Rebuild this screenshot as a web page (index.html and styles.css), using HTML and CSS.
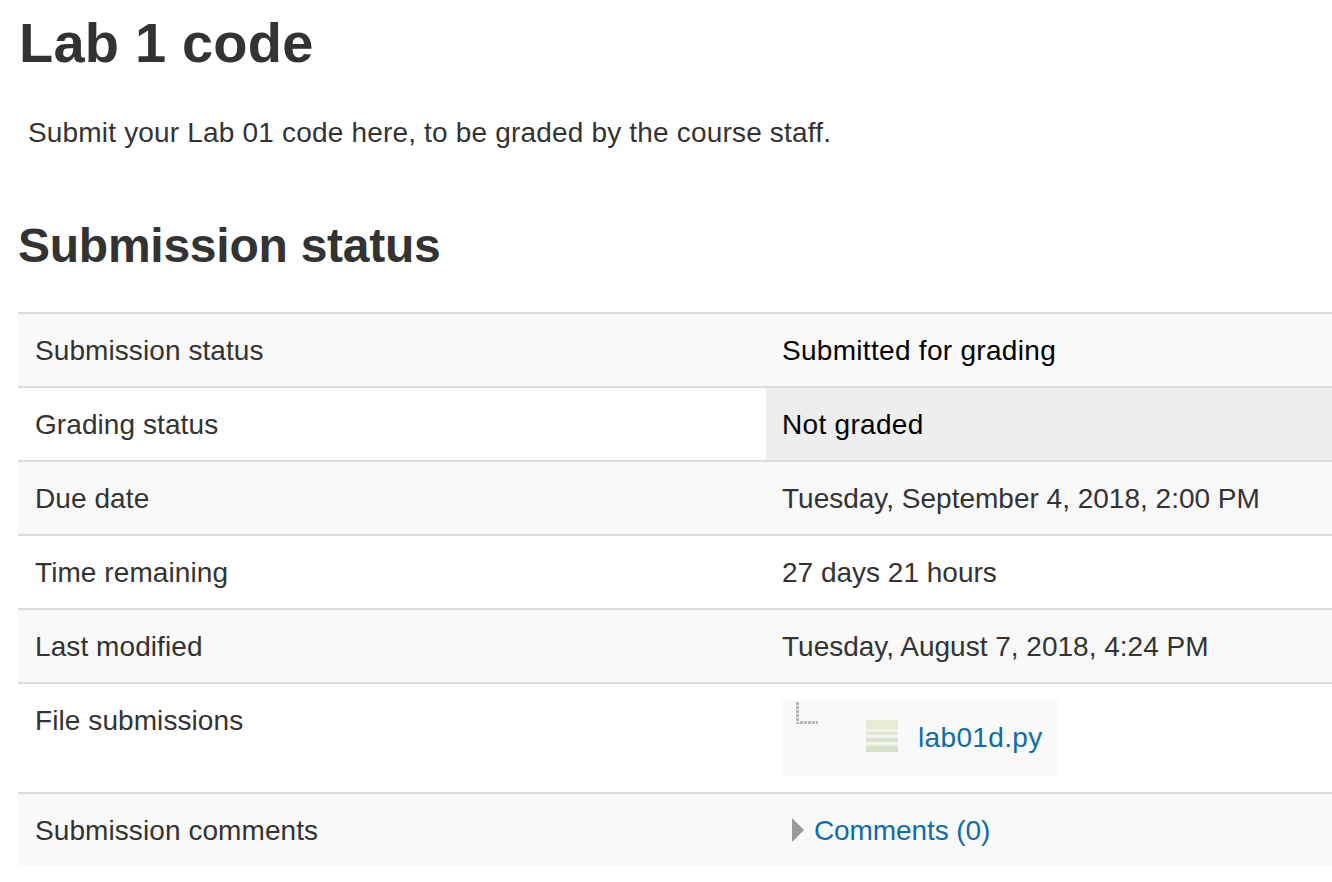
FILE: index.html
```html
<!DOCTYPE html>
<html lang="en">
<head>
    <meta charset="UTF-8">
    <title>Lab 1 code</title>
    <link rel="stylesheet" href="styles.css">
</head>
<body>
    <h2 class="page-title">Lab 1 code</h2>
    <p class="intro">Submit your Lab 01 code here, to be graded by the course staff.</p>
    <h3 class="section-title">Submission status</h3>
    <table class="status-table">
        <tr class="odd">
            <td class="label">Submission status</td>
            <td class="value dark">Submitted for grading</td>
        </tr>
        <tr>
            <td class="label">Grading status</td>
            <td class="value dark not-graded">Not graded</td>
        </tr>
        <tr class="odd">
            <td class="label">Due date</td>
            <td class="value">Tuesday, September 4, 2018, 2:00 PM</td>
        </tr>
        <tr>
            <td class="label">Time remaining</td>
            <td class="value">27 days 21 hours</td>
        </tr>
        <tr class="odd">
            <td class="label">Last modified</td>
            <td class="value">Tuesday, August 7, 2018, 4:24 PM</td>
        </tr>
        <tr class="files-row">
            <td class="label">File submissions</td>
            <td class="value">
                <div class="file-box">
                    <span class="tree-line"></span>
                    <svg class="file-icon" width="32" height="32" viewBox="0 0 32 32">
                        <defs>
                            <linearGradient id="stripes" x1="0" y1="0" x2="0" y2="1">
                                <stop offset="0" stop-color="#e6ecd2"/>
                                <stop offset=".26" stop-color="#e6ebd6"/>
                                <stop offset=".33" stop-color="#f8f9f3"/>
                                <stop offset=".41" stop-color="#d8e2c8"/>
                                <stop offset=".5" stop-color="#f8f9f3"/>
                                <stop offset=".62" stop-color="#d2dcc3"/>
                                <stop offset=".74" stop-color="#f8f9f3"/>
                                <stop offset=".84" stop-color="#d8e0ca"/>
                                <stop offset="1" stop-color="#d6dfc8"/>
                            </linearGradient>
                        </defs>
                        <rect width="32" height="32" fill="url(#stripes)"/>
                    </svg>
                    <a href="#none" class="file-link">lab01d.py</a>
                </div>
            </td>
        </tr>
        <tr class="odd">
            <td class="label">Submission comments</td>
            <td class="value comments">
                <span class="arrow"></span><a href="#none">Comments (0)</a>
            </td>
        </tr>
    </table>
</body>
</html>
```

FILE: styles.css
```css
*{
    padding: 0;
    margin: 0;
    box-sizing: border-box;
}
html,body{
    overflow: hidden;
}
body{
    height: 882px;
    background: #fff;
    color: #333;
    font-family: "Liberation Sans", Arial, sans-serif;
    font-size: 28px;
}
a{
    color: #0f6cab;
    text-decoration: none;
}
.page-title{
    padding: 10px 0 0 19px;
    height: 107px;
    font-size: 56px;
    line-height: 66px;
    letter-spacing: .2px;
}
.intro{
    padding-left: 28px;
    height: 107px;
    font-size: 28px;
    line-height: 52px;
    letter-spacing: .18px;
}
.section-title{
    padding-left: 18px;
    height: 98px;
    font-size: 48px;
    line-height: 64px;
    letter-spacing: -.25px;
}
.status-table{
    margin-left: 18px;
    width: 1314px;
    table-layout: fixed;
    border-collapse: separate;
    border-spacing: 0;
}
.status-table td{
    height: 74px;
    border-top: 2px solid #ddd;
    padding: 2px 16px 0;
    font-size: 28px;
    vertical-align: middle;
}
.status-table .label{
    width: 748px;
    padding-left: 17px;
    letter-spacing: .08px;
}
.odd td{
    background: #f9f9f9;
}
.dark{
    color: #000;
    letter-spacing: .3px;
}
.status-table .not-graded{
    background: #eee;
}
.status-table .files-row td{
    height: 110px;
    padding-top: 16px;
    vertical-align: top;
}
.files-row .label{
    line-height: 42px;
}
.file-box{
    display: flex;
    align-items: center;
    position: relative;
    width: 276px;
    height: 76px;
    background: #f9f9f9;
    padding-left: 84px;
}
.file-link{
    letter-spacing: .35px;
}
.tree-line{
    position: absolute;
    left: 14px;
    top: 2px;
    width: 22px;
    height: 22px;
    background:
        repeating-linear-gradient(to bottom, #b8b8b8 0 3px, #f0f0f0 3px 4px) left top / 3px 22px no-repeat,
        repeating-linear-gradient(to right, #b8b8b8 0 3px, #f0f0f0 3px 4px) left bottom / 22px 3px no-repeat;
}
.file-icon{
    flex: none;
    margin-right: 20px;
    margin-top: -4px;
}
.comments a{
    margin-left: 10px;
    letter-spacing: -.1px;
}
.arrow{
    display: inline-block;
    width: 0;
    height: 0;
    vertical-align: -2px;
    margin-left: 10px;
    border-left: 12px solid #999;
    border-top: 12px solid transparent;
    border-bottom: 12px solid transparent;
}
```
